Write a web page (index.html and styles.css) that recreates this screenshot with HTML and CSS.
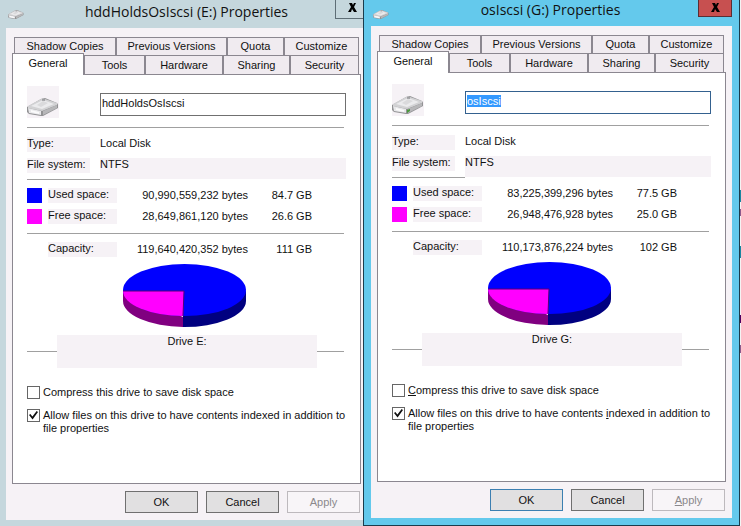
FILE: index.html
```html
<!DOCTYPE html>
<html lang="en">
<head>
  <meta charset="UTF-8">
  <meta name="viewport" content="width=device-width, initial-scale=1.0">
  <title>Disk Properties</title>
  <link rel="stylesheet" href="styles.css">
</head>
<body>
  <!-- shared shapes -->
  <svg class="defs" width="0" height="0">
    <symbol id="drive" viewBox="0 0 32 32">
      <path d="M0 21 L14 13 Q16 12 18 12 L30 17 Q31 18 31 19 L31 22 L16 30 L14 30 L2 28 L0 26 Z" fill="#929294"/>
      <path d="M1 20 L14 13 Q16 12 18 13 L30 17 L30 19 L15 25 L1 22 Z" fill="#d2d2d4"/>
      <path d="M4 20 L16 14 L27 18 L15 23 Z" fill="#ebebed"/>
      <path d="M10 19 L16 15 L21 17 L14 21 Z" fill="#dadadc"/>
      <path d="M1 22 L14 25 L14 29 L2 27 Z" fill="#e8e8ea"/>
      <path d="M4 24 L12 26 L12 28 L4 26 Z" fill="#fbfbfb"/>
      <path d="M16 25 L30 19 L30 22 L16 29 Z" fill="#b7b7b9"/>
      <path d="M15 14 L18 14" stroke="#6d6d70" stroke-width="1"/>
    </symbol>
    <symbol id="pie" viewBox="0 0 124 64">
      <path d="M0 27 V37 A62 26 0 0 0 60 63 V53 Z" fill="#800080"/>
      <path d="M60 52 V63 A62 26 0 0 0 123 37 V27 Z" fill="#000080"/>
      <ellipse cx="61.5" cy="26" rx="61.5" ry="26" fill="#0000ff"/>
      <path d="M0 27 H61 L60 52 A61 25 0 0 1 0 27 Z" fill="#ff00ff"/>
      <path d="M0 27 H61 L60 52" fill="none" stroke="#50007a"/>
    </symbol>
    <symbol id="cross" viewBox="0 0 9 9">
      <path d="M1 0 H4 L5 2 L6 0 H8 L6 4 L9 9 H6 L4 6 L3 9 H0 L3 4 Z" fill="#000"/>
    </symbol>
  </svg>

  <div class="desktop">
    <section class="window">
      <header class="titlebar">
        <svg class="title-icon" width="16" height="16"><use href="#drive"/></svg>
        <h1>hddHoldsOsIscsi (E:) Properties</h1>
        <button class="close" aria-label="Close"><svg width="9" height="9"><use href="#cross"/></svg></button>
      </header>
      <div class="client">
        <nav class="tabs">
          <div class="tab-row back">
            <button class="tab">Shadow Copies</button>
            <button class="tab">Previous Versions</button>
            <button class="tab">Quota</button>
            <button class="tab">Customize</button>
          </div>
          <div class="tab-row front">
            <button class="tab active">General</button>
            <button class="tab">Tools</button>
            <button class="tab">Hardware</button>
            <button class="tab">Sharing</button>
            <button class="tab">Security</button>
          </div>
        </nav>
        <div class="panel">
          <div class="name-row">
            <svg class="drive-icon" width="32" height="32"><use href="#drive"/></svg>
            <input class="name" type="text" value="hddHoldsOsIscsi" aria-label="Volume label">
          </div>
          <hr>
          <dl class="info">
            <dt>Type:</dt><dd>Local Disk</dd>
            <dt>File system:</dt><dd class="fs">NTFS</dd>
          </dl>
          <hr class="short">
          <table class="space">
            <tr><td class="key"><span class="swatch used"></span></td><th><span>Used space:</span></th><td class="bytes">90,990,559,232 bytes</td><td class="gb">84.7 GB</td></tr>
            <tr><td class="key"><span class="swatch free"></span></td><th><span>Free space:</span></th><td class="bytes">28,649,861,120 bytes</td><td class="gb">26.6 GB</td></tr>
          </table>
          <hr class="tight">
          <table class="space">
            <tr><td class="key"></td><th><span>Capacity:</span></th><td class="bytes">119,640,420,352 bytes</td><td class="gb">111 GB</td></tr>
          </table>
          <svg class="pie" width="124" height="64"><use href="#pie"/></svg>
          <div class="drive-label"><span>Drive E:</span></div>
          <label class="check"><input type="checkbox"><span>Compress this drive to save disk space</span></label>
          <label class="check"><input type="checkbox" checked><span>Allow files on this drive to have contents indexed in addition to file properties</span></label>
        </div>
        <footer class="buttons">
          <button class="btn">OK</button>
          <button class="btn">Cancel</button>
          <button class="btn" disabled>Apply</button>
        </footer>
      </div>
    </section>

    <section class="window focused">
      <header class="titlebar">
        <svg class="title-icon" width="16" height="16"><use href="#drive"/></svg>
        <h1>osIscsi (G:) Properties</h1>
        <button class="close" aria-label="Close"><svg width="9" height="9"><use href="#cross"/></svg></button>
      </header>
      <div class="client">
        <nav class="tabs">
          <div class="tab-row back">
            <button class="tab">Shadow Copies</button>
            <button class="tab">Previous Versions</button>
            <button class="tab">Quota</button>
            <button class="tab">Customize</button>
          </div>
          <div class="tab-row front">
            <button class="tab active">General</button>
            <button class="tab">Tools</button>
            <button class="tab">Hardware</button>
            <button class="tab">Sharing</button>
            <button class="tab">Security</button>
          </div>
        </nav>
        <div class="panel">
          <div class="name-row">
            <svg class="drive-icon" width="32" height="32"><use href="#drive"/><path d="M15 26 L18 25 L18 27 L15 29 Z" fill="#4b9a3c"/></svg>
            <input class="name" id="name-g" type="text" value="osIscsi" aria-label="Volume label">
          </div>
          <hr>
          <dl class="info">
            <dt>Type:</dt><dd>Local Disk</dd>
            <dt>File system:</dt><dd class="fs">NTFS</dd>
          </dl>
          <hr class="short">
          <table class="space">
            <tr><td class="key"><span class="swatch used"></span></td><th><span>Used space:</span></th><td class="bytes">83,225,399,296 bytes</td><td class="gb">77.5 GB</td></tr>
            <tr><td class="key"><span class="swatch free"></span></td><th><span>Free space:</span></th><td class="bytes">26,948,476,928 bytes</td><td class="gb">25.0 GB</td></tr>
          </table>
          <hr class="tight">
          <table class="space">
            <tr><td class="key"></td><th><span>Capacity:</span></th><td class="bytes">110,173,876,224 bytes</td><td class="gb">102 GB</td></tr>
          </table>
          <svg class="pie" width="124" height="64"><use href="#pie"/></svg>
          <div class="drive-label"><span>Drive G:</span></div>
          <label class="check"><input type="checkbox"><span><u>C</u>ompress this drive to save disk space</span></label>
          <label class="check"><input type="checkbox" checked><span>Allow files on this drive to have contents <u>i</u>ndexed in addition to file properties</span></label>
        </div>
        <footer class="buttons">
          <button class="btn default">OK</button>
          <button class="btn">Cancel</button>
          <button class="btn" disabled><u>A</u>pply</button>
        </footer>
      </div>
    </section>
  </div>

  <script>
    var nameBox = document.getElementById('name-g');
    nameBox.focus();
    nameBox.select();
  </script>
</body>
</html>
```
FILE: styles.css
```css
* {
  box-sizing: border-box;
}

body {
  margin: 0;
  font-family: "Liberation Sans", Arial, sans-serif;
  font-size: 11px;
  line-height: 13px;
  color: #111;
  background: #f4f4f4;
}

button,
input {
  font: inherit;
  color: inherit;
}

.defs {
  display: block;
}

/* the gradient is the edge of the window behind */
.desktop {
  display: grid;
  grid-template-columns: 363fr 377fr;
  min-height: 100vh;
  padding-right: 1px;
  background: linear-gradient(#f4f4f4 190px, #1a86a0 190px 202px, #f4f4f4 202px 209px, #8c5a8c 209px 216px, #f4f4f4 216px 246px, #1a86a0 246px 258px, #f4f4f4 258px 315px, #500060 315px 323px, #f4f4f4 323px 345px, #8c5a8c 345px 353px, #f4f4f4 353px);
}

.window {
  display: flex;
  flex-direction: column;
  padding: 0 0 6px 6px;
  background: #c5d7dd;
}

.window.focused {
  padding: 0 7px 7px;
  background: #64c9ec;
  border: 1px solid #1b3c4c;
  border-top: 0;
}

.titlebar {
  display: flex;
  align-items: flex-start;
  height: 28px;
  padding-left: 2px;
}

.focused .titlebar {
  height: 26px;
}

.title-icon {
  margin-top: 4px;
}

.titlebar h1 {
  flex: 1;
  margin: 0;
  padding-left: 14px;
  font-family: "Open Sans", "Noto Sans", sans-serif;
  font-size: 14px;
  font-weight: normal;
  line-height: 24px;
  text-align: center;
}

.focused .titlebar h1 {
  line-height: 20px;
}

.close {
  width: 28px;
  height: 19px;
  padding: 0 0 2px 6px;
  border: 1px solid #5e6e76;
  border-width: 0 0 1px 1px;
  background: #c5d7dd;
}

.focused .close {
  width: 34px;
  height: 17px;
  padding: 0;
  border: 1px solid #5b2d33;
  border-top: 0;
  background: #c75050;
}

.client {
  flex: 1;
  display: flex;
  flex-direction: column;
  padding: 9px 2px 7px 6px;
  background: #f6f2f6;
}

.focused .client {
  padding-right: 6px;
}

.tab-row {
  display: grid;
  margin: 0 2px;
}

.back {
  grid-template-columns: 102fr 111fr 57fr 75fr;
}

.front {
  grid-template-columns: 70fr 61fr 78fr 67fr 69fr;
}

.tab {
  height: 19px;
  padding: 0;
  border: 1px solid #8b8790;
  border-bottom: 0;
  background: #f0ebf0;
}

.back .tab {
  height: 18px;
}

.tab.active {
  position: relative;
  height: 22px;
  margin: -2px 0 -1px -2px;
  padding-bottom: 3px;
  background: #fff;
}

.panel {
  flex: 1;
  padding: 11px 14px 0;
  border: 1px solid #8b8790;
  background: #fff;
}

.name-row {
  display: flex;
  gap: 41px;
  align-items: center;
  height: 32px;
}

.drive-icon {
  flex: none;
  background: #f6f2f6;
}

.name {
  flex: 1;
  min-width: 0;
  height: 23px;
  margin-top: 4px;
  padding: 0 1px 2px;
  border: 1px solid #707070;
  background: #fff;
  outline: none;
}

.name:focus {
  border-color: #34618f;
}

.name::selection {
  color: #fff;
  background: #3399ff;
}

hr {
  margin: 9px 2px 0 0;
  border: 0;
  border-top: 1px solid #a0a0a0;
}

hr.short {
  width: 73px;
  margin-top: 0;
}

hr.tight {
  margin-top: 6px;
}

.info {
  display: grid;
  grid-template-columns: 63px 1fr;
  column-gap: 10px;
  row-gap: 6px;
  margin: 9px 0 0;
}

.info dt {
  height: 15px;
  background: #f6f2f6;
}

.info dd {
  margin: 0;
}

.info .fs {
  height: 21px;
  background: #f6f2f6;
}

.space {
  width: 100%;
  border-collapse: collapse;
  margin-top: 5px;
}

.space td,
.space th {
  height: 21px;
  padding: 0;
  font-weight: normal;
  text-align: left;
}

.space .key {
  width: 21px;
}

.space th {
  width: 69px;
}

.space th span {
  display: block;
  height: 15px;
  background: #f6f2f6;
}

.swatch {
  display: block;
  width: 15px;
  height: 15px;
}

.used {
  background: #0000ff;
}

.free {
  background: #ff00ff;
}

.space .bytes {
  width: 131px;
  text-align: right;
}

.space .gb {
  padding-right: 34px;
  text-align: right;
}

.pie {
  display: block;
  margin: 4px 0 0 96px;
}

.drive-label {
  display: flex;
  align-items: center;
  margin: 7px 2px 0 0;
}

.drive-label::before,
.drive-label::after {
  content: "";
  flex: 30;
  border-top: 1px solid #a0a0a0;
}

.drive-label::after {
  flex: 27;
}

.drive-label span {
  flex: 260;
  height: 33px;
  text-align: center;
  background: #f6f2f6;
}

.check {
  display: flex;
  gap: 3px;
  margin-top: 10px;
}

.drive-label + .check {
  margin-top: 18px;
}

.check input {
  appearance: none;
  display: grid;
  place-items: center;
  flex: none;
  width: 13px;
  height: 13px;
  margin: 0;
  border: 1px solid #666;
  background: #fff;
}

.check input:checked::before {
  content: "";
  width: 9px;
  height: 9px;
  background: #111;
  clip-path: polygon(0 45%, 15% 33%, 38% 60%, 85% 0, 100% 12%, 40% 95%);
}

.buttons {
  display: flex;
  justify-content: flex-end;
  gap: 8px;
  margin-top: 7px;
  padding-right: 1px;
}

.btn {
  width: 73px;
  height: 22px;
  padding: 0;
  border: 1px solid #707070;
  background: #e1e0e1;
}

.btn.default {
  border-color: #3c7fb1;
}

.btn:disabled {
  color: #8b888b;
  border-color: #bdb9bd;
  background: #f8f5f8;
}
```
